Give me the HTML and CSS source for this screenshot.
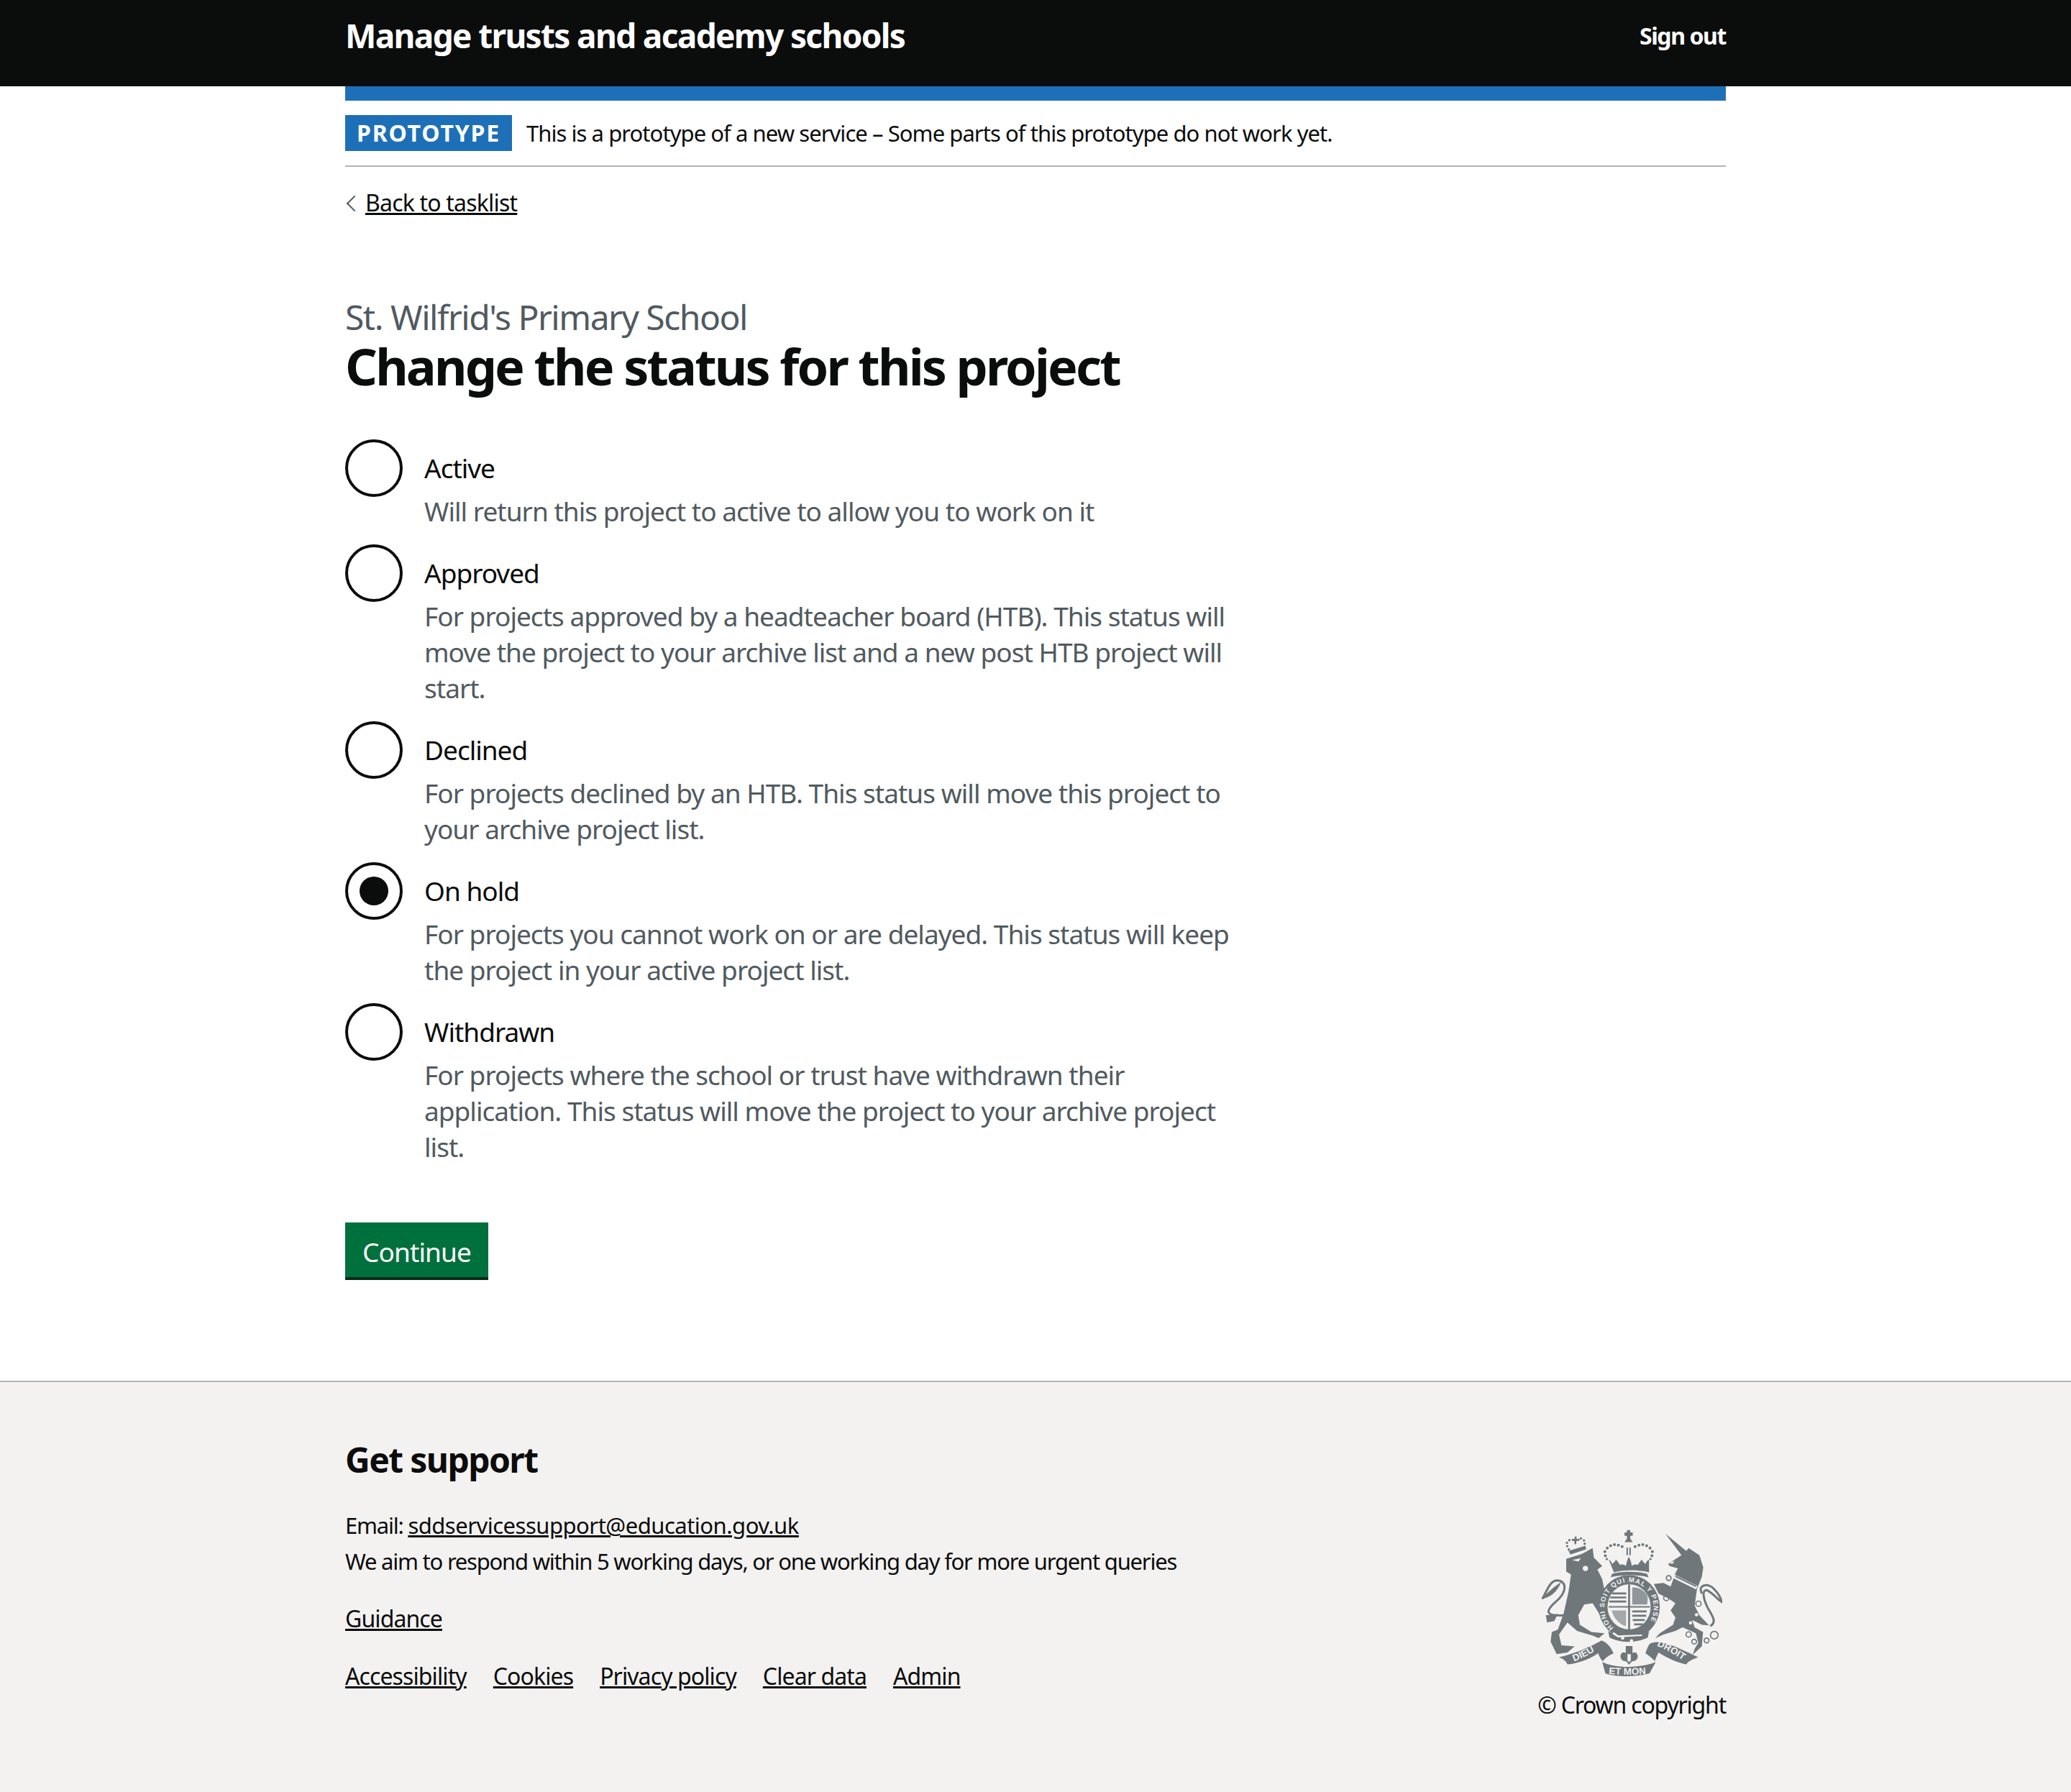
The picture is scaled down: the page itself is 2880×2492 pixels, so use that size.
FILE: index.html
```html
<!DOCTYPE html>
<html lang="en">

<head>
    <meta charset="UTF-8">
    <meta name="viewport" content="width=device-width, initial-scale=1">
    <title>Change the status for this project</title>
    <link rel="stylesheet" href="styles.css">
</head>

<body>
    <header class="site-header">
        <div class="site-width header-row">
            <a class="service-name" href="#">Manage trusts and academy schools</a>
            <a class="sign-out" href="#">Sign out</a>
        </div>
    </header>

    <div class="site-width">
        <div class="blue-bar"></div>

        <div class="phase-banner">
            <strong class="phase-tag">PROTOTYPE</strong>
            <span class="phase-text">This is a prototype of a new service – Some parts of this prototype do not work yet.</span>
        </div>

        <a class="back-link" href="#">Back to tasklist</a>

        <main class="main">
            <span class="caption">St. Wilfrid's Primary School</span>
            <h1 class="title">Change the status for this project</h1>

            <form class="radios">
                <div class="radio">
                    <span class="radio-mark"></span>
                    <div class="radio-body">
                        <div class="radio-label">Active</div>
                        <div class="radio-hint">Will return this project to active to allow you to work on it</div>
                    </div>
                </div>
                <div class="radio">
                    <span class="radio-mark"></span>
                    <div class="radio-body">
                        <div class="radio-label">Approved</div>
                        <div class="radio-hint">For projects approved by a headteacher board (HTB). This status will<br>move the project to your archive list and a new post HTB project will<br>start.</div>
                    </div>
                </div>
                <div class="radio">
                    <span class="radio-mark"></span>
                    <div class="radio-body">
                        <div class="radio-label">Declined</div>
                        <div class="radio-hint">For projects declined by an HTB. This status will move this project to<br>your archive project list.</div>
                    </div>
                </div>
                <div class="radio">
                    <span class="radio-mark checked"></span>
                    <div class="radio-body">
                        <div class="radio-label">On hold</div>
                        <div class="radio-hint">For projects you cannot work on or are delayed. This status will keep<br>the project in your active project list.</div>
                    </div>
                </div>
                <div class="radio">
                    <span class="radio-mark"></span>
                    <div class="radio-body">
                        <div class="radio-label">Withdrawn</div>
                        <div class="radio-hint">For projects where the school or trust have withdrawn their<br>application. This status will move the project to your archive project<br>list.</div>
                    </div>
                </div>

                <button type="button" class="button">Continue</button>
            </form>
        </main>
    </div>

    <footer class="footer">
        <div class="site-width footer-row">
            <div class="footer-left">
                <h2 class="footer-title">Get support</h2>
                <p class="footer-line">Email: <a class="footer-email" href="#">sddservicessupport@education.gov.uk</a></p>
                <p class="footer-line">We aim to respond within 5 working days, or one working day for more urgent queries</p>
                <p class="footer-guidance"><a href="#">Guidance</a></p>
                <ul class="footer-links">
                    <li><a href="#">Accessibility</a></li>
                    <li><a href="#">Cookies</a></li>
                    <li><a href="#">Privacy policy</a></li>
                    <li><a href="#">Clear data</a></li>
                    <li><a href="#">Admin</a></li>
                </ul>
            </div>
            <div class="footer-right">
                <!-- Royal arms, drawn by hand -->
                <svg class="crest" viewBox="130 80 755 620" aria-hidden="true">
                    <g fill="#6f777b">
                        <!-- top crown -->
                        <path d="M488 85h14v10h10v14h-10v12l10 14h-34l10-14v-12h-10V95h10z"/>
                        <rect x="486" y="158" width="6" height="32"/>
                        <rect x="498" y="158" width="6" height="32"/>
                        <path d="M412 208c8 4 12 10 14 18 6-4 12-8 16-18 8 8 12 14 16 22 10-4 18-2 26 4 2-14 6-26 12-38 6 12 10 24 12 38 8-6 16-8 26-4 4-8 8-14 16-22 4 10 10 14 16 18 2-8 6-14 14-18v54c-30-12-118-12-146 0z"/>
                        <path d="M426 268c30-12 112-12 146 0l6 14c-40-12-118-12-158 0z"/>
                        <g>
                            <circle cx="398" cy="192" r="6"/><circle cx="396" cy="175" r="6"/><circle cx="406" cy="160" r="6"/><circle cx="420" cy="150" r="6"/><circle cx="436" cy="146" r="6"/><circle cx="452" cy="148" r="6"/><circle cx="468" cy="154" r="6"/>
                            <circle cx="522" cy="154" r="6"/><circle cx="538" cy="148" r="6"/><circle cx="554" cy="146" r="6"/><circle cx="570" cy="150" r="6"/><circle cx="584" cy="160" r="6"/><circle cx="594" cy="175" r="6"/><circle cx="592" cy="192" r="6"/>
                            <circle cx="404" cy="206" r="5"/><circle cx="586" cy="206" r="5"/>
                        </g>

                        <!-- lion -->
                        <path d="M235 205L300 185 345 160 350 200 385 235 365 250 385 290 395 340 378 360 400 398 405 435 375 438 345 390 310 395 285 440 292 480 340 510 395 515 370 535 345 525 280 505 240 470 205 520 215 565 270 570 240 595 195 602 170 550 175 510 200 500 225 430 245 340 255 270 235 258z"/>
                        <path d="M225 440C150 445 145 425 190 385 240 345 240 295 195 295 165 298 155 340 135 372" fill="none" stroke="#6f777b" stroke-width="9"/>
                        <path d="M215 300C180 325 150 350 133 372 170 365 190 345 205 320z"/>
                        <path d="M150 440l50-6-15 30-30 6z"/>
                        <!-- lion crown -->
                        <path d="M245 172L315 150 318 165 252 187z"/>
                        <path d="M258 122h12v-10h8v10h12v8h-12l-2 14h-6l-2-14h-10z"/>
                        <g>
                            <circle cx="239" cy="152" r="5"/><circle cx="238" cy="138" r="5"/><circle cx="248" cy="127" r="5"/><circle cx="296" cy="120" r="5"/><circle cx="309" cy="128" r="5"/><circle cx="312" cy="142" r="5"/><circle cx="246" cy="166" r="5"/>
                        </g>

                        <!-- unicorn -->
                        <path d="M648 100L735 172 745 160 790 190 806 240 800 280 780 330 770 400 790 440 830 482 800 480 760 460 770 490 805 510 800 570 762 605 770 580 785 555 775 515 720 490 690 505 640 520 606 536 625 515 680 480 690 450 670 420 690 390 660 370 620 350 600 310 640 305 670 320 690 265 700 245 665 235 660 225 715 190z"/>
                        <path d="M800 350C780 310 830 305 850 330 870 350 880 370 882 384 860 370 850 350 820 335 800 335 805 370 825 410 850 450 860 470 835 485" fill="none" stroke="#6f777b" stroke-width="9"/>
                        <g fill="none" stroke="#6f777b" stroke-width="5">
                            <circle cx="662" cy="285" r="10"/><circle cx="652" cy="368" r="11"/><circle cx="786" cy="392" r="11"/><circle cx="745" cy="520" r="11"/><circle cx="768" cy="550" r="10"/><circle cx="820" cy="545" r="10"/><circle cx="852" cy="523" r="16"/>
                        </g>
                    </g>
                    <path d="M688 272l94 46-6 14-94-46z" fill="#f3f2f1"/>
                    <path d="M690 278l86 42" stroke="#6f777b" stroke-width="6" fill="none"/>
                    <circle cx="778" cy="438" r="7" fill="#f3f2f1"/>
                    <circle cx="753" cy="472" r="7" fill="#f3f2f1"/>
                    <path d="M662 222l24-8-8 12z" fill="#f3f2f1"/>
                    <circle cx="315" cy="245" r="11" fill="#f3f2f1"/>
                    <path d="M260 210l36-8-10 14z" fill="#f3f2f1"/>

                    <!-- garter and shield -->
                    <ellipse cx="497" cy="405" rx="128" ry="132" fill="#6f777b"/>
                    <ellipse cx="497" cy="405" rx="90" ry="94" fill="#f3f2f1"/>
                    <g fill="#6f777b">
                        <rect x="493" y="312" width="8" height="190"/>
                        <rect x="412" y="402" width="172" height="6"/>
                        <path d="M425 345h60v8h-60zM418 362h67v8h-67zM414 379h71v8h-71zM510 420h60v8h-60zM510 438h58v8h-58zM512 456h50v8h-50zM518 474h36v8h-36z"/>
                        <path d="M510 325c24-4 46 10 62 30 4 14 2 28 0 40h-62z" opacity="0.75"/>
                        <path d="M424 420h60v66c-24-6-50-30-60-66z" opacity="0.6"/>
                    </g>
                    <defs>
                        <path id="garter-ring" d="M432 492A103 107 0 1 1 566 488"/>
                        <path id="ribbon-left" d="M268 632C300 620 340 600 372 578"/>
                        <path id="ribbon-mid" d="M412 684C450 690 540 690 585 682"/>
                        <path id="ribbon-right" d="M612 568C650 580 695 610 735 638"/>
                    </defs>
                    <text class="crest-ring" fill="#f3f2f1"><textPath href="#garter-ring" textLength="480">HONI SOIT QUI MAL Y PENSE</textPath></text>
                    <path d="M410 505c40 30 110 30 170 0l-5 28c-50 24-110 24-160 0z" fill="#6f777b"/>
                    <path d="M432 510l20 14 100-4-2 6-100 6-22-14z" fill="#f3f2f1"/>
                    <circle cx="470" cy="535" r="7" fill="#f3f2f1"/>
                    <circle cx="507" cy="547" r="7" fill="#f3f2f1"/>

                    <!-- motto ribbons -->
                    <g fill="#6f777b">
                        <path d="M205 615C270 600 340 570 382 545 410 555 428 585 432 600 415 605 395 620 388 632 380 625 372 610 368 598 330 625 285 640 240 645 235 630 220 622 205 615z"/>
                        <path d="M385 635C440 662 540 662 608 635L582 682C530 698 440 698 398 682z"/>
                        <path d="M582 560C620 535 690 570 785 615 760 625 745 630 735 645 690 635 650 615 620 595 612 610 605 625 605 632 595 620 575 605 565 598 570 585 575 570 582 560z"/>
                        <path d="M483 568h28v30c12-10 22 2 22 14 0 12-12 22-24 20l-12 14-12-14c-12 2-24-8-24-20 0-12 10-24 22-14z"/>
                    </g>
                    <path d="M490 602h14v26l-7 8-7-8z" fill="#f3f2f1"/>
                    <text class="crest-text" fill="#f3f2f1"><textPath href="#ribbon-left">DIEU</textPath></text>
                    <text class="crest-text" fill="#f3f2f1"><textPath href="#ribbon-mid">ET MON</textPath></text>
                    <text class="crest-text" fill="#f3f2f1"><textPath href="#ribbon-right">DROIT</textPath></text>
                </svg>
                <a class="copyright" href="#">© Crown copyright</a>
            </div>
        </div>
    </footer>
</body>

</html>
```

FILE: styles.css
```css
* {
    box-sizing: border-box;
}

body {
    font-family: 'Noto Sans', Arial, sans-serif;
    color: #0b0c0c;
    margin: 0;
    background-color: #fff;
    font-size: 37px;
}

a {
    color: #0b0c0c;
}

.site-width {
    width: 1920px;
    margin: 0 auto;
}

/* Header */
.site-header {
    background-color: #0b0c0c;
    height: 120px;
}

.header-row {
    display: flex;
    justify-content: space-between;
    align-items: center;
    height: 98px;
}

.service-name {
    color: #fff;
    font-size: 46px;
    font-weight: 700;
    text-decoration: none;
    letter-spacing: -1.67px;
}

.sign-out {
    color: #fff;
    font-size: 32px;
    font-weight: 700;
    text-decoration: none;
    letter-spacing: -1.4px;
}

.blue-bar {
    height: 20px;
    background-color: #1d70b8;
}

/* Phase banner */
.phase-banner {
    display: flex;
    align-items: center;
    height: 92px;
    border-bottom: 2px solid #b1b4b6;
}

.phase-tag {
    background-color: #1d70b8;
    color: #fff;
    font-size: 32px;
    line-height: 50px;
    padding: 0 16px;
    letter-spacing: 1.8px;
}

.phase-text {
    font-size: 31px;
    margin-left: 20px;
    letter-spacing: -0.94px;
}

.back-link {
    display: inline-block;
    position: relative;
    margin-top: 30px;
    padding-left: 28px;
    font-size: 32px;
    line-height: 40px;
    letter-spacing: -0.8px;
}

.back-link::before {
    content: "";
    position: absolute;
    left: 5px;
    top: 13px;
    width: 14px;
    height: 14px;
    border-left: 2px solid #505a5f;
    border-top: 2px solid #505a5f;
    transform: rotate(-45deg);
}

/* Main */
.main {
    padding-top: 108px;
    padding-bottom: 140px;
}

.caption {
    display: block;
    color: #505a5f;
    font-size: 48px;
    line-height: 56px;
    letter-spacing: -1.5px;
}

.title {
    margin: 0 0 62px;
    font-size: 70px;
    line-height: 80px;
    font-weight: 700;
    letter-spacing: -2.8px;
}

.radio {
    display: flex;
    margin-bottom: 21px;
}

.radio-mark {
    position: relative;
    flex: none;
    width: 80px;
    height: 80px;
    border: 4px solid #0b0c0c;
    border-radius: 50%;
    margin-right: 30px;
}

.radio-mark.checked::after {
    content: "";
    position: absolute;
    left: 16px;
    top: 16px;
    width: 40px;
    height: 40px;
    border-radius: 50%;
    background-color: #0b0c0c;
}

.radio-label {
    padding-top: 15px;
    line-height: 50px;
    letter-spacing: -1px;
}

.radio-hint {
    color: #505a5f;
    line-height: 50px;
    margin-top: 10px;
    letter-spacing: -0.97px;
    white-space: nowrap;
}

.button {
    display: block;
    margin-top: 80px;
    height: 80px;
    padding: 0 24px;
    border: 0;
    background-color: #00703c;
    box-shadow: inset 0 -4px 0 #002d18;
    color: #fff;
    font-family: inherit;
    font-size: 37px;
    letter-spacing: -0.9px;
}

/* Footer */
.footer {
    background-color: #f3f2f1;
    border-top: 2px solid #b1b4b6;
    height: 572px;
    font-size: 32px;
    padding-top: 78px;
}

.footer-row {
    display: flex;
    justify-content: space-between;
}

.footer-left {
    letter-spacing: -0.9px;
}

.footer-title {
    margin: 0 0 36px;
    font-size: 48px;
    line-height: 60px;
    font-weight: 700;
    letter-spacing: -1.6px;
}

.footer-line {
    margin: 0;
    font-size: 31px;
    line-height: 50px;
    letter-spacing: -1.23px;
}

.footer-email {
    letter-spacing: -0.5px;
}

.footer-guidance {
    margin: 30px 0;
    line-height: 50px;
}

.footer-links {
    display: flex;
    gap: 37px;
    list-style: none;
    margin: 0;
    padding: 0;
    line-height: 50px;
}

.footer-right {
    display: flex;
    flex-direction: column;
    align-items: flex-end;
    padding-top: 126px;
}

.crest {
    display: block;
    width: 252px;
    height: 207px;
    margin-right: 5px;
}

.crest-text {
    font-family: 'Liberation Sans', sans-serif;
    font-size: 40px;
    font-weight: 700;
}

.crest-ring {
    font-family: 'Liberation Sans', sans-serif;
    font-size: 28px;
    font-weight: 700;
}

.copyright {
    margin-top: 13px;
    line-height: 50px;
    text-decoration: none;
    letter-spacing: -1.2px;
}
```
